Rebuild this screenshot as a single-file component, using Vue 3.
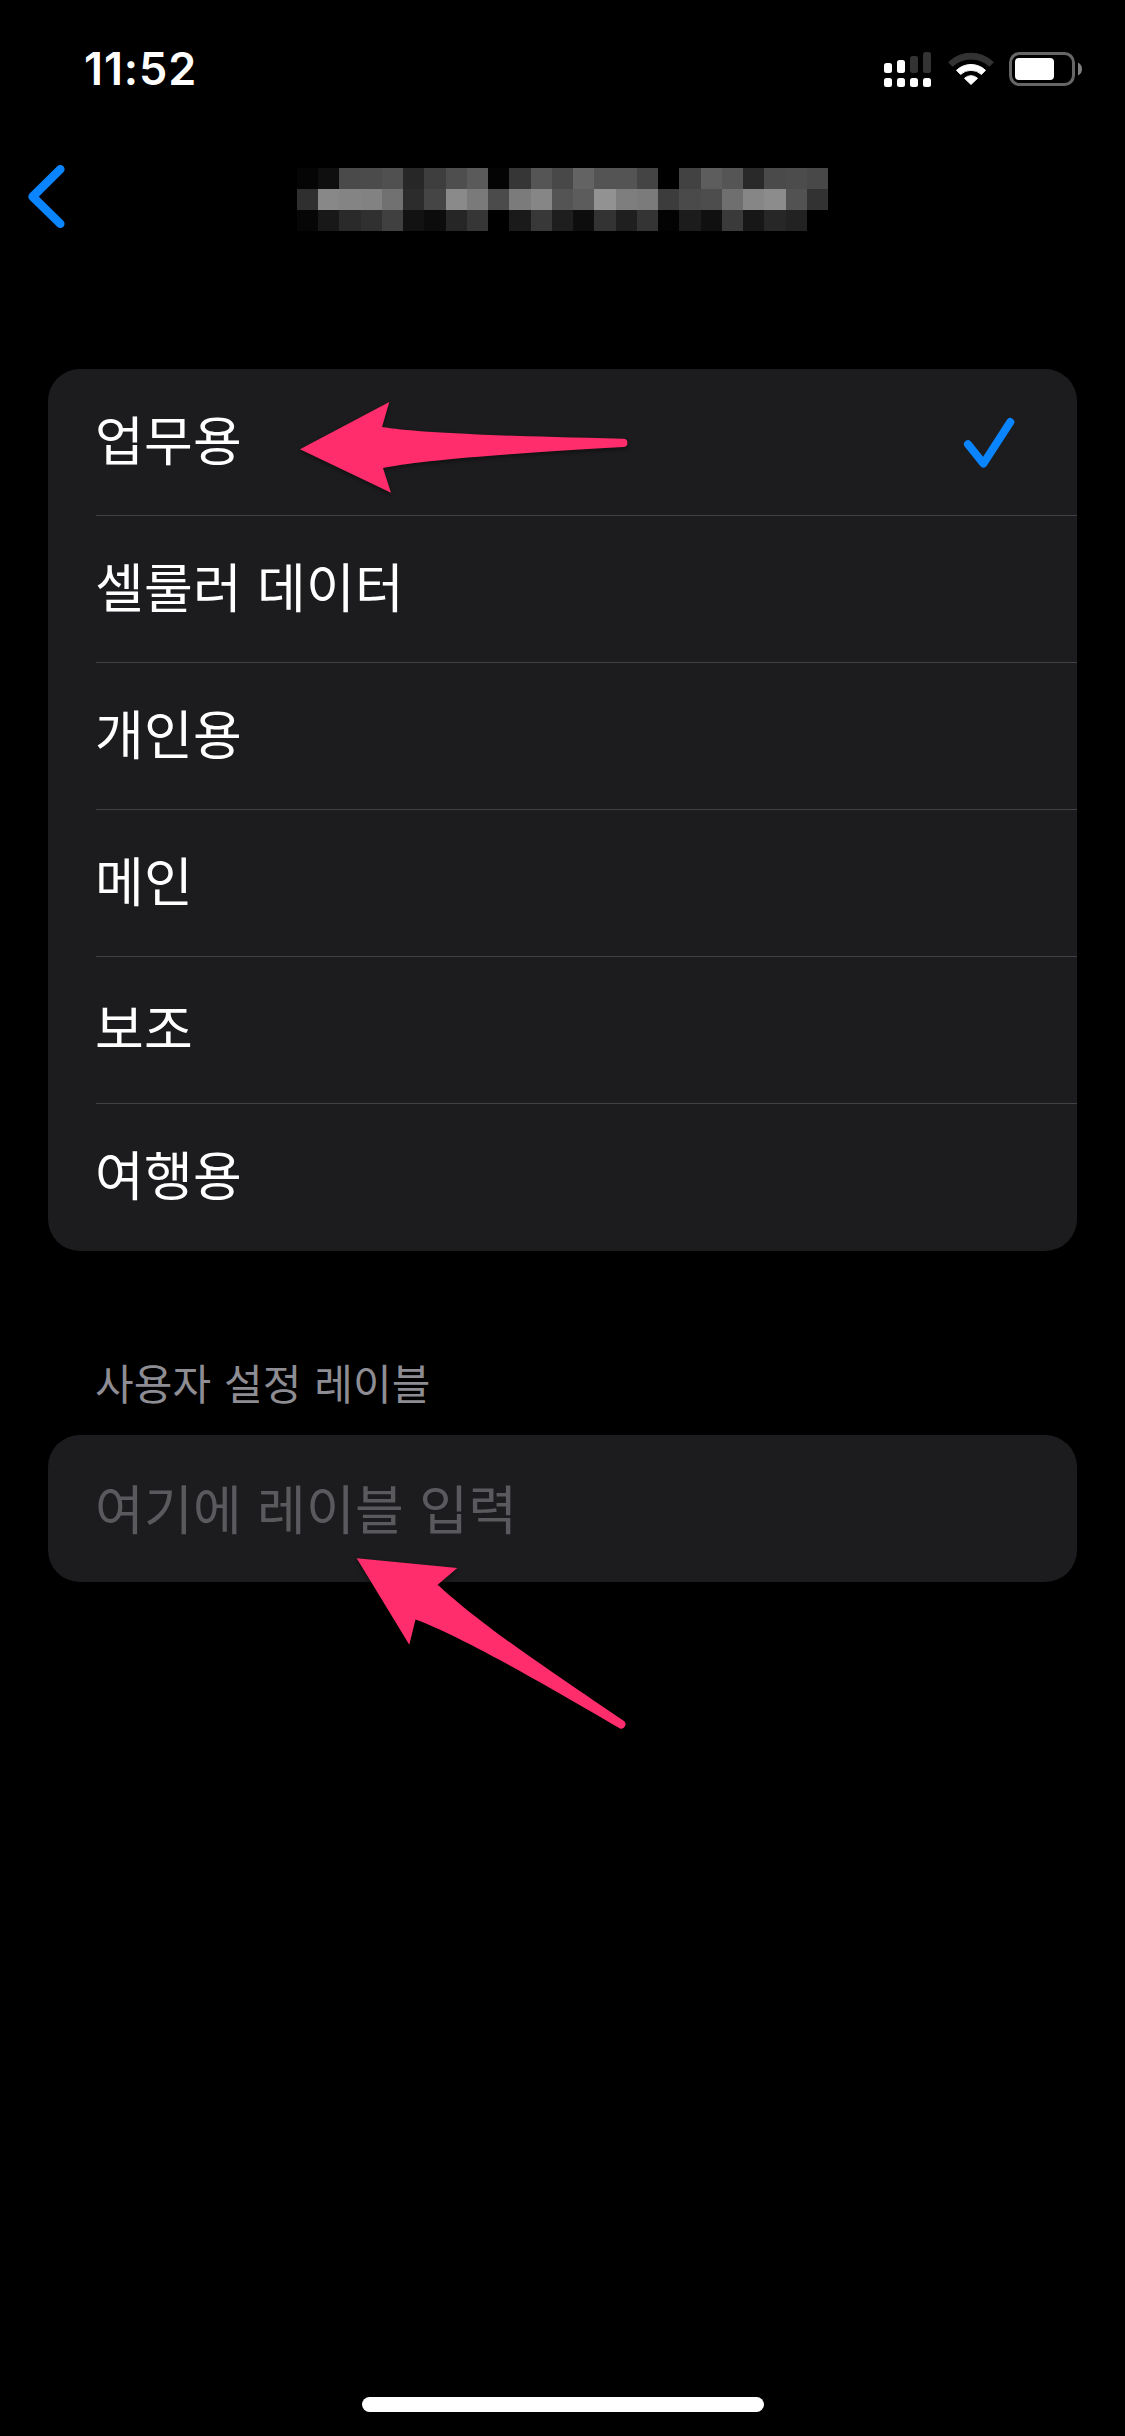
<script setup>
const labels = [
  { name: '업무용', selected: true },
  { name: '셀룰러 데이터', selected: false },
  { name: '개인용', selected: false },
  { name: '메인', selected: false },
  { name: '보조', selected: false },
  { name: '여행용', selected: false },
]

// Grey levels of the redacted title, one list per row
const mosaic = [
  [5, 15, 74, 75, 80, 39, 62, 78, 90, 4, 54, 85, 72, 99, 84, 84, 68, 0, 66, 93, 85, 41, 74, 76, 72],
  [47, 136, 132, 130, 113, 44, 69, 138, 122, 75, 123, 134, 84, 92, 146, 126, 123, 60, 74, 77, 111, 134, 140, 82, 50],
  [6, 24, 42, 48, 64, 18, 12, 38, 54, 0, 26, 56, 30, 13, 51, 31, 52, 3, 28, 16, 58, 23, 39, 34, 0],
].flat()
</script>

<template>
  <div class="screen">
    <header class="status">
      <span class="time">11:52</span>
      <div class="indicators">
        <svg class="signal" width="47" height="35" viewBox="0 0 47 35">
          <g fill="#fff">
            <rect x="0" y="11" width="8" height="10" rx="2.5" />
            <rect x="13" y="8" width="8" height="13" rx="2.5" />
            <rect x="0" y="26" width="8" height="9" rx="2.5" />
            <rect x="13" y="26" width="8" height="9" rx="2.5" />
            <rect x="26" y="26" width="8" height="9" rx="2.5" />
            <rect x="39" y="26" width="8" height="9" rx="2.5" />
          </g>
          <g fill="#333">
            <rect x="26" y="4" width="8" height="17" rx="2.5" />
            <rect x="39" y="0" width="8" height="21" rx="2.5" />
          </g>
        </svg>
        <svg class="wifi" width="46" height="35" viewBox="0 0 46 35">
          <path fill="#333" stroke="#333" stroke-linejoin="round" d="M.6 10.2A32.3 32.3 0 0 1 45.4 10.2L41.3 14.3A26.5 26.5 0 0 0 4.7 14.3Z" />
          <path fill="#fff" stroke="#fff" stroke-linejoin="round" d="M8.5 18.3A21 21 0 0 1 37.5 18.3L33.4 22.4A15.2 15.2 0 0 0 12.6 22.4Z" />
          <path fill="#fff" stroke="#fff" stroke-linejoin="round" d="M16.5 26.3A9.4 9.4 0 0 1 29.5 26.3L23 32.5Z" />
        </svg>
        <svg class="battery" width="74" height="34" viewBox="0 0 74 34">
          <rect x="1.5" y="1.5" width="63" height="31" rx="9" fill="none" stroke="#666" stroke-width="3" />
          <rect x="6" y="6" width="39" height="22" rx="4" fill="#fff" />
          <path d="M69 10.5Q73 12.5 73 17T69 23.5Z" fill="#808080" />
        </svg>
      </div>
    </header>

    <nav class="navbar">
      <svg class="back" width="40" height="66" viewBox="0 0 40 66">
        <path d="M32.3 5.3L4.6 32.6L32.3 59.7" />
      </svg>
      <div class="title">
        <i v-for="(level, i) in mosaic" :key="i" :style="{ background: `rgb(${level},${level},${level})` }"></i>
      </div>
    </nav>

    <main class="content">
      <ul class="card">
        <li v-for="label in labels" :key="label.name" class="row">
          <span class="name">{{ label.name }}</span>
          <svg v-if="label.selected" class="check" width="52" height="52" viewBox="0 0 52 52">
            <path d="M5 27.2L20.4 46.6L47.3 5" />
          </svg>
        </li>
      </ul>

      <h2 class="caption">사용자 설정 레이블</h2>
      <div class="card field">
        <span class="name placeholder">여기에 레이블 입력</span>
      </div>
    </main>

    <footer class="bottom"><span class="home"></span></footer>

    <svg class="arrows" width="1125" height="2436" viewBox="0 0 1125 2436">
      <path d="M300 449.3L389.3 402L382 427C410 431.5 470 435.5 623.3 438.8A4.1 4.1 0 0 1 623.3 447C480 455 410 462 383 468L391 492.7Z" />
      <path d="M356.7 1558.2L457.3 1568L437.7 1584.7C475 1619 523 1653 624 1721A4.3 4.3 0 0 1 620 1728.4C510 1664 450 1632 415.5 1619.5L409.3 1644.7Z" />
    </svg>
  </div>
</template>

<style>
body {
  margin: 0;
  background: #000;
}
</style>

<style scoped>
.screen {
  position: relative;
  display: flex;
  flex-direction: column;
  width: 1125px;
  height: 2436px;
  overflow: hidden;
  background: #000;
  color: #fff;
  font-family: "Noto Sans CJK KR", sans-serif;
}

.status {
  display: flex;
  justify-content: space-between;
  align-items: flex-start;
  height: 100px;
  padding: 0 42px 0 84px;
  box-sizing: border-box;
}

.time {
  margin-top: 39px;
  font: 600 45px/60px Inter, sans-serif;
  letter-spacing: 0.9px;
}

.indicators {
  display: flex;
  margin-top: 52px;
}

.wifi {
  margin-left: 17px;
}

.battery {
  margin-left: 15px;
}

.navbar {
  display: flex;
  align-items: flex-start;
  height: 269px;
  padding: 64px 0 0 28px;
  box-sizing: border-box;
}

.back path,
.check path {
  fill: none;
  stroke: #0a84ff;
  stroke-width: 8.6;
  stroke-linecap: round;
  stroke-linejoin: round;
}

.check path {
  stroke-width: 8;
}

.title {
  display: grid;
  grid-template-columns: repeat(25, 1fr);
  grid-auto-rows: 21px;
  width: 531px;
  margin: 4px 0 0 229px;
}

.content {
  padding: 0 48px;
}

.card {
  margin: 0;
  padding: 0;
  list-style: none;
  border-radius: 32px;
  background: #1c1c1e;
}

.row,
.field {
  display: flex;
  align-items: center;
  justify-content: space-between;
  height: 147px;
  box-sizing: border-box;
}

.row {
  margin-left: 48px;
  padding-right: 62px;
  border-bottom: 1px solid #424246;
}

.row:last-child {
  border-bottom-color: transparent;
}

.name {
  margin-left: -1px;
  padding-bottom: 8px;
  font-size: 53px;
  line-height: 80px;
  letter-spacing: 0.24px;
  word-spacing: 3px;
}

.check {
  margin-top: 1px;
}

.field {
  padding-left: 48px;
}

.placeholder {
  padding-bottom: 3px;
  color: #5a5a5e;
}

.caption {
  height: 184px;
  margin: 0 0 0 47px;
  padding-top: 99px;
  box-sizing: border-box;
  color: #8d8d93;
  font-size: 42px;
  font-weight: 400;
  line-height: 64px;
  letter-spacing: 0.16px;
  word-spacing: 3px;
}

.bottom {
  display: flex;
  justify-content: center;
  margin-top: auto;
  padding-bottom: 24px;
}

.home {
  width: 402px;
  height: 15px;
  border-radius: 8px;
  background: #fff;
}

.arrows {
  position: absolute;
  top: 0;
  left: 0;
  fill: #ff2d6c;
  filter: drop-shadow(0 2px 2px rgba(0, 0, 0, 0.45));
  pointer-events: none;
}
</style>
